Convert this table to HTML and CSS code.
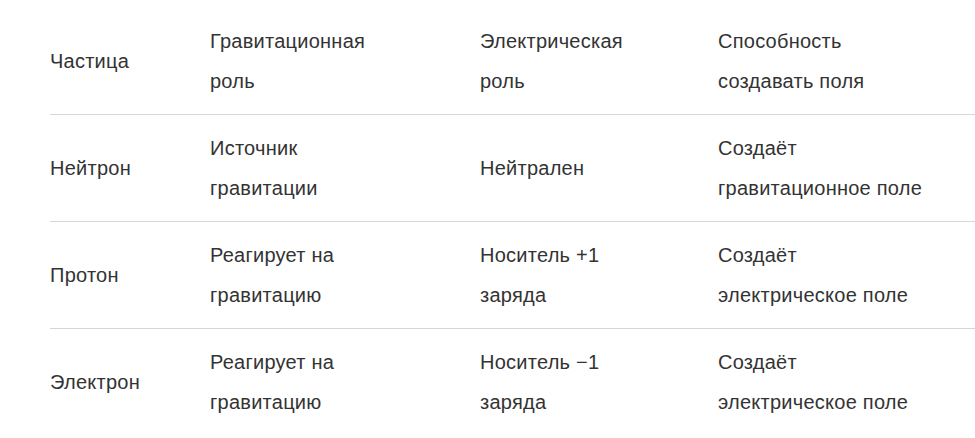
FILE: index.html
```html
<!DOCTYPE html>
<html lang="ru">
<head>
<meta charset="utf-8">
<title>Частицы</title>
<link rel="stylesheet" href="styles.css">
</head>
<body>
<div class="page">
  <table class="grid">
    <colgroup>
      <col class="c1"><col class="c2"><col class="c3"><col class="c4">
    </colgroup>
    <tbody>
      <tr>
        <td>Частица</td>
        <td>Гравитационная роль</td>
        <td>Электрическая роль</td>
        <td>Способность создавать поля</td>
      </tr>
      <tr>
        <td>Нейтрон</td>
        <td>Источник гравитации</td>
        <td>Нейтрален</td>
        <td>Создаёт гравитационное поле</td>
      </tr>
      <tr>
        <td>Протон</td>
        <td>Реагирует на гравитацию</td>
        <td>Носитель +1 заряда</td>
        <td>Создаёт электрическое поле</td>
      </tr>
      <tr>
        <td>Электрон</td>
        <td>Реагирует на гравитацию</td>
        <td>Носитель −1 заряда</td>
        <td>Создаёт электрическое поле</td>
      </tr>
    </tbody>
  </table>
</div>
</body>
</html>
```
FILE: styles.css
```css
html, body {
  margin: 0;
  background: #ffffff;
}
.page {
  padding: 8px 0 0 50px;
  font-family: "Liberation Sans", Arial, sans-serif;
  font-size: 20px;
  line-height: 40px;
  letter-spacing: 0.25px;
  color: #333333;
}
.grid {
  border-collapse: collapse;
  table-layout: fixed;
  width: 925px;
}
.c1 { width: 160px; }
.c2 { width: 270px; }
.c3 { width: 238px; }
.c4 { width: 257px; }
.grid td {
  padding: 13px 0 13px 0;
  vertical-align: middle;
  text-align: left;
}
.grid td:nth-child(2) { padding-right: 95px; }
.grid td:nth-child(3) { padding-right: 63px; }
.grid td:nth-child(4) { padding-right: 42px; }
.grid tr {
  border-bottom: 1px solid #d6d6d6;
}
.grid tr:last-child {
  border-bottom: none;
}
```
